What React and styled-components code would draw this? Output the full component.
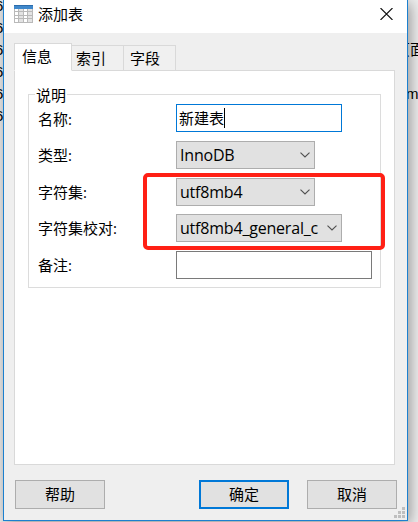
import React from "react";
import styled, { createGlobalStyle, css } from "styled-components";

const Global = createGlobalStyle`
  * { box-sizing: border-box; }
  body {
    margin: 0;
    overflow: hidden;
    background: #fff;
    color: #000;
    font: 15px/20px "Open Sans", "Noto Sans CJK SC", sans-serif;
  }
`;

const Desktop = styled.div`
  position: relative;
  width: 418px;
  height: 522px;
  padding-left: 3px;
  overflow: hidden;
  background: #efefef;
`;

const Behind = styled.div`
  position: absolute;
  overflow: hidden;
  white-space: nowrap;
  font-family: "Liberation Sans", "Noto Sans CJK SC", sans-serif;
  font-size: 15px;
`;

const LeftLines = styled(Behind)`
  left: 0;
  top: -5px;
  width: 3px;
  line-height: 22px;
  div { margin-left: -5px; }
`;

const RightText = styled(Behind)`
  left: 408px;
  top: ${(p) => p.$top}px;
  width: 10px;
  span { display: block; margin-left: ${(p) => p.$shift}px; }
`;

const Dialog = styled.div`
  position: relative;
  display: flex;
  flex-direction: column;
  width: 405px;
  height: 521px;
  border: 1px solid #1c80cf;
  border-top: 0;
  background: #efefef;
  box-shadow: 2px 3px 14px rgba(0, 0, 0, 0.4);
`;

const TitleBar = styled.header`
  display: flex;
  align-items: center;
  height: 33px;
  padding: 0 14px 5px 10px;
  background: #fff;
`;

const Title = styled.h1`
  flex: 1;
  margin: 0 0 0 5px;
  font-size: 15px;
  font-weight: 400;
`;

const Tabs = styled.nav`
  display: flex;
  align-items: flex-end;
  height: 38px;
  margin: 0 0 -1px 10px;
  z-index: 1;
`;

const Tab = styled.div`
  width: 52px;
  height: 26px;
  padding: 3px 0 0 ${(p) => p.$inset || 7}px;
  border: 1px solid #d9d9d9;
  border-left: 0;
  background: #f0f0f0;
  line-height: 19px;
  ${(p) =>
    p.$active &&
    css`
      width: 58px;
      height: 28px;
      border-left: 1px solid #d9d9d9;
      border-bottom-color: #fff;
      background: #fff;
    `}
`;

const Panel = styled.main`
  width: 381px;
  height: 395px;
  margin-left: 10px;
  padding: 23px 13px;
  border: 1px solid #d9d9d9;
  background: #fff;
`;

const Group = styled.section`
  position: relative;
  display: flex;
  flex-direction: column;
  gap: 9px;
  width: 353px;
  height: 194px;
  padding: 9px 0 0 9px;
  border: 1px solid #dcdcdc;
`;

const Legend = styled.span`
  position: absolute;
  left: 6px;
  top: -10px;
  padding: 0 1px;
  background: #fff;
`;

const Row = styled.label`
  display: grid;
  grid-template-columns: 138px auto;
  justify-content: start;
  height: 28px;
  margin-bottom: ${(p) => p.$after || 0}px;
`;

const Caption = styled.span`
  padding-top: ${(p) => p.$drop || 4}px;
`;

const Field = styled.div`
  display: flex;
  align-items: center;
  width: ${(p) => p.$width}px;
  height: 28px;
  padding-left: 2px;
  border: 1px solid ${(p) => (p.$focus ? "#0078d7" : "#7a7a7a")};
`;

const Caret = styled.i`
  width: 1px;
  height: 20px;
  background: #000;
`;

const Select = styled.div`
  display: flex;
  align-items: center;
  width: ${(p) => p.$width}px;
  height: 28px;
  padding: 0 4px 0 3px;
  border: 1px solid #adadad;
  background: #e1e1e1;
  font-size: 16px;
  letter-spacing: -0.2px;
`;

const Value = styled.span`
  flex: 1;
  overflow: hidden;
  white-space: nowrap;
`;

const Highlight = styled.div`
  position: absolute;
  left: 114px;
  top: 78px;
  width: 242px;
  height: 77px;
  border: 4px solid #ff2015;
  border-radius: 5px;
`;

const Footer = styled.footer`
  display: flex;
  padding: 15px 10px 0 11px;
`;

const Button = styled.div`
  display: flex;
  align-items: center;
  justify-content: center;
  width: 90px;
  height: 29px;
  padding-bottom: 1px;
  margin-left: ${(p) => p.$gap || 0}px;
  border: ${(p) => (p.$primary ? "2px solid #0078d7" : "1px solid #adadad")};
  background: #e1e1e1;
`;

const Grip = styled.svg`
  position: absolute;
  left: 390px;
  top: 507px;
`;

const TableIcon = () => (
  <svg width="19" height="18" viewBox="0 0 19 18" shapeRendering="crispEdges">
    <path fill="#fff" d="M0 0h19v18H0z" />
    <path fill="#e3e3e3" d="M5 4h5v13H5zM14 4h4v13h-4z" />
    <path
      fill="none"
      stroke="#b9b9b9"
      d="M.5 4v13.5h18V4M4.5 4v13M9.5 4v13M13.5 4v13M0 6.5h19M0 10.5h19M0 13.5h19"
    />
    <path fill="#3f88cb" d="M0 1h19v3H0z" />
    <path fill="#2c6cab" d="M0 0h19v1H0z" />
  </svg>
);

const CloseIcon = () => (
  <svg width="13" height="12" viewBox="0 0 13 12">
    <path d="M.5 0l12 12m0-12l-12 12" stroke="#111" strokeWidth="1.1" />
  </svg>
);

const Chevron = () => (
  <svg width="10" height="6" viewBox="0 0 10 6">
    <path d="M.5.6L5 5 9.5.6" fill="none" stroke="#505050" strokeWidth="1.1" />
  </svg>
);

const Dropdown = ({ width, children }) => (
  <Select $width={width}>
    <Value>{children}</Value>
    <Chevron />
  </Select>
);

export default function App() {
  return (
    <Desktop>
      <Global />
      <Dialog>
        <TitleBar>
          <TableIcon />
          <Title>添加表</Title>
          <CloseIcon />
        </TitleBar>
        <Tabs>
          <Tab $active>信息</Tab>
          <Tab $inset={4}>索引</Tab>
          <Tab $inset={6}>字段</Tab>
        </Tabs>
        <Panel>
          <Group>
            <Legend>说明</Legend>
            <Row>
              <Caption $drop={5}>名称:</Caption>
              <Field $width={166} $focus>
                新建表
                <Caret />
              </Field>
            </Row>
            <Row>
              <Caption>类型:</Caption>
              <Dropdown width={139}>InnoDB</Dropdown>
            </Row>
            <Row $after={-1}>
              <Caption>字符集:</Caption>
              <Dropdown width={139}>utf8mb4</Dropdown>
            </Row>
            <Row>
              <Caption>字符集校对:</Caption>
              <Dropdown width={166}>utf8mb4_general_c</Dropdown>
            </Row>
            <Row>
              <Caption>备注:</Caption>
              <Field $width={196} />
            </Row>
            <Highlight />
          </Group>
        </Panel>
        <Footer>
          <Button>帮助</Button>
          <Button $gap={94} $primary>确定</Button>
          <Button $gap={18}>取消</Button>
        </Footer>
        <Grip width="11" height="11" fill="#bfbfbf" shapeRendering="crispEdges">
          <path d="M8 0h3v3H8zM4 4h3v3H4zM8 4h3v3H8zM0 8h3v3H0zM4 8h3v3H4zM8 8h3v3H8z" />
        </Grip>
      </Dialog>
      <LeftLines>
        {[0, 1, 2, 3, 4, 5].map((n) => (
          <div key={n}>6</div>
        ))}
      </LeftLines>
      <RightText $top={40} $shift={-13}><span>页面</span></RightText>
      <RightText $top={84} $shift={-2}><span>m</span></RightText>
    </Desktop>
  );
}
